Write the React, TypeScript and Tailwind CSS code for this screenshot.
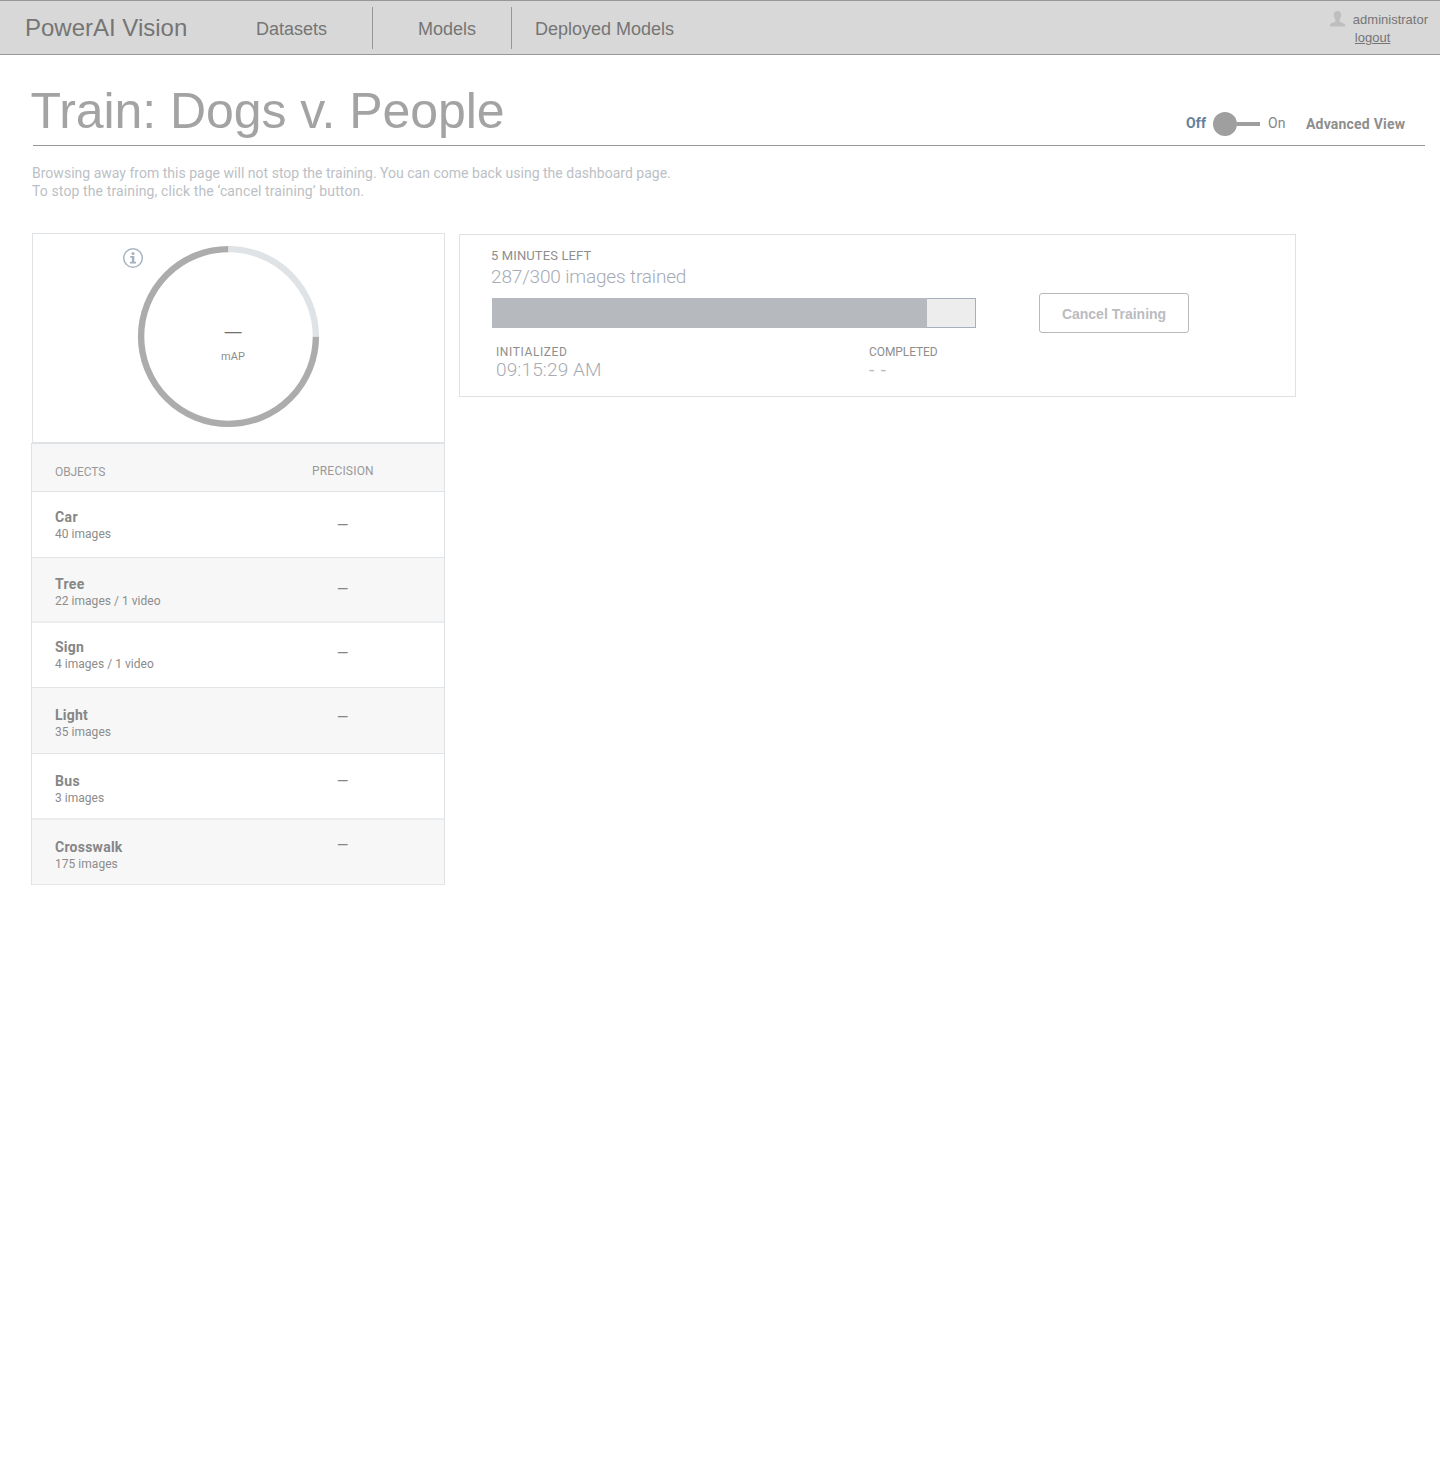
type Row = {
  name: string;
  count: string;
  row: string;
  label: string;
  dash: string;
  tracking: string;
};

const rows: Row[] = [
  { name: "Car", count: "40 images", row: "h-[66px] border-b border-[#e2e5e7] bg-white", label: "pt-[17px]", dash: "pt-[25px]", tracking: "tracking-[0.4px]" },
  { name: "Tree", count: "22 images / 1 video", row: "h-[65px] border-b-2 border-[#ebedee] bg-[#f7f7f7]", label: "pt-[18px]", dash: "pt-[23px]", tracking: "tracking-[0.3px]" },
  { name: "Sign", count: "4 images / 1 video", row: "h-[65px] border-b border-[#e2e5e7] bg-white", label: "pt-[16px]", dash: "pt-[22px]", tracking: "tracking-[0.2px]" },
  { name: "Light", count: "35 images", row: "h-[66px] border-b border-[#e2e5e7] bg-[#f7f7f7]", label: "pt-[19px]", dash: "pt-[21px]", tracking: "tracking-[0.2px]" },
  { name: "Bus", count: "3 images", row: "h-[66px] border-b-2 border-[#ebedee] bg-white", label: "pt-[19px]", dash: "pt-[19px]", tracking: "tracking-[0.35px]" },
  { name: "Crosswalk", count: "175 images", row: "h-[65px] border-b border-[#e4e7ea] bg-[#f7f7f7]", label: "pt-[19px]", dash: "pt-[17px]", tracking: "tracking-[0.25px]" },
];

function UserIcon() {
  return (
    <svg className="mt-[10px] h-4 w-4 shrink-0" viewBox="0 0 16 16" fill="#bcbec0">
      <path d="M7.5 0C10 0 11.2 1.6 11.1 4.1C11.4 4.3 11.4 5.2 10.9 5.7C10.7 6.9 10.2 7.7 9.6 8.3V10C9.9 11 11.3 11.4 12.8 12C14.5 12.6 15.2 13.4 15.2 14.6V15.6H-.1V14.6C-.1 13.4.5 12.6 2.2 12C3.7 11.4 5.1 11 5.4 10V8.3C4.8 7.7 4.3 6.9 4.1 5.7C3.6 5.2 3.6 4.3 3.9 4.1C3.8 1.6 5 0 7.5 0Z" />
    </svg>
  );
}

function InfoIcon() {
  return (
    <svg className="h-[22px] w-[22px]" viewBox="0 0 22 22" fill="none">
      <circle cx="11" cy="11" r="9.3" stroke="#abb6c5" strokeWidth="1.5" />
      <circle cx="11" cy="6.6" r="1.5" fill="#a3b0c0" />
      <path d="M8.2 9H12.3V14.8H14V16.6H8V14.8H9.9V10.8H8.2Z" fill="#a3b0c0" />
    </svg>
  );
}

function TopBar() {
  return (
    <header className="flex h-[55px] border-y border-[#979797] bg-[#d8d8d8] text-[#757575]">
      <div className="ml-[25px] w-[231px] pt-[13px] text-2xl leading-[27px]">PowerAI Vision</div>
      <nav className="flex text-lg leading-5">
        <a className="w-[116px] pt-[18px]">Datasets</a>
        <div className="mt-[6px] h-[42px] w-px bg-[#979797]" />
        <a className="w-[138px] pt-[18px] pl-[45px]">Models</a>
        <div className="mt-[6px] h-[42px] w-px bg-[#979797]" />
        <a className="pt-[18px] pl-[23px]">Deployed Models</a>
      </nav>
      <div className="mr-[12px] ml-auto flex">
        <UserIcon />
        <div className="ml-[7px] pt-[11px] text-[13px] leading-[15px]">
          <div>administrator</div>
          <a className="mt-[3px] ml-[2px] block underline">logout</a>
        </div>
      </div>
    </header>
  );
}

function Toggle() {
  return (
    <div className="flex items-start font-['Roboto'] text-sm leading-4">
      <span className="w-[27px] pt-[60px] font-bold tracking-[0.2px] text-[#64809a]">Off</span>
      <span className="mt-[57px] flex items-center">
        <span className="h-6 w-6 rounded-full bg-[#9f9f9f]" />
        <span className="h-1 w-[23px] bg-[#9f9f9f]" />
      </span>
      <span className="w-[38px] pt-[60px] pl-[8px] text-[#868686]">On</span>
      <span className="ml-[8px] w-[100px] pt-[61px] font-bold tracking-[0.2px] whitespace-nowrap text-[#8e8e8e]">Advanced View</span>
    </div>
  );
}

function Gauge() {
  return (
    <div className="relative h-[210px] border border-[#dfe3e6]">
      <div className="absolute top-[13px] left-[89px]"><InfoIcon /></div>
      <svg className="absolute top-[11px] left-[104px] h-[184px] w-[184px]" viewBox="0 0 184 184" fill="none" strokeWidth="6.4">
        <path d="M178.9 91.5A87.4 87.4 0 1 1 91.5 4.1" stroke="#acacac" />
        <path d="M91.5 4.1A87.4 87.4 0 0 1 178.9 91.5" stroke="#dfe3e6" />
      </svg>
      <div className="absolute top-[85px] left-[180px] w-10 text-center font-['Roboto']">
        <div className="text-[26px] leading-7 font-light text-[#6f6f6f]">—</div>
        <div className="mt-[3px] text-[11px] leading-[13px] tracking-[0.1px] text-[#8c8c8c]">mAP</div>
      </div>
    </div>
  );
}

function ObjectTable() {
  return (
    <div className="-ml-px border-x border-t border-[#dfe3e6] font-['Roboto']">
      <div className="flex h-12 border-b border-[#dfe3e6] bg-[#f7f7f7] pl-[23px] text-xs leading-[14px] text-[#999999]">
        <div className="w-[257px] pt-[21px] tracking-[-0.12px]">OBJECTS</div>
        <div className="pt-[20px] tracking-[0.2px]">PRECISION</div>
      </div>
      {rows.map((r) => (
        <div key={r.name} className={`flex pl-[23px] ${r.row}`}>
          <div className={`w-[277px] ${r.label}`}>
            <div className={`text-sm leading-4 font-bold text-[#868686] ${r.tracking}`}>{r.name}</div>
            <div className="mt-px text-xs leading-4 tracking-[0.03px] text-[#8c8c8c]">{r.count}</div>
          </div>
          <div className={`w-[21px] text-center ${r.dash}`}>
            <div className="text-[15px] leading-4 text-[#868686]">—</div>
          </div>
        </div>
      ))}
    </div>
  );
}

function ProgressPanel() {
  return (
    <section className="mt-px ml-[14px] flex h-[163px] w-[837px] border border-[#e0e1e3] pl-[31px] font-['Roboto']">
      <div className="w-[548px] pt-[13px]">
        <div className="text-[13px] leading-[15px] tracking-[0.12px] text-[#8e8e8e]">5 MINUTES LEFT</div>
        <div className="mt-[2px] text-[19px] leading-[23px] font-light tracking-[-0.16px] text-[#a7abb4]">287/300 images trained</div>
        <div className="mt-[10px] ml-px h-[30px] w-[484px] border border-[#a5b0bc] bg-[#ededed]">
          <div className="-m-px h-[30px] w-[435px] bg-[#b6b9be]" />
        </div>
        <div className="mt-[17px] ml-[5px] flex">
          <div className="w-[373px]">
            <div className="text-xs leading-[14px] tracking-[0.6px] text-[#8e8e8e]">INITIALIZED</div>
            <div className="text-[19px] leading-[21px] font-light tracking-[0.14px] text-[#a7abb4]">09:15:29 AM</div>
          </div>
          <div>
            <div className="text-xs leading-[14px] tracking-[-0.08px] text-[#8e8e8e]">COMPLETED</div>
            <div className="text-[19px] leading-[21px] tracking-[0.9px] text-[#b6b9be]">- -</div>
          </div>
        </div>
      </div>
      <button className="mt-[58px] h-10 w-[150px] rounded-[3px] border border-[#b6b9be] pt-px font-['Liberation_Sans'] text-sm leading-4 font-bold text-[#babcbf]">
        Cancel Training
      </button>
    </section>
  );
}

export default function App() {
  return (
    <div className="min-h-[1466px] w-[1440px] bg-white font-['Liberation_Sans',sans-serif]">
      <TopBar />
      <div className="mr-[15px] ml-[33px] flex h-[91px] justify-between border-b border-[#979797] pr-[19px]">
        <h1 className="-ml-[2.5px] pt-[28px] text-[50px] leading-[56px] tracking-[-0.06px] whitespace-nowrap text-[#a3a3a3]">Train: Dogs v. People</h1>
        <Toggle />
      </div>
      <div className="mt-[18px] ml-8 h-[69px] font-['Roboto'] text-sm leading-[18px] text-[#bcbfc5]">
        <p className="tracking-[0.015px]">Browsing away from this page will not stop the training. You can come back using the dashboard page.</p>
        <p className="tracking-[0.12px]">To stop the training, click the ‘cancel training’ button.</p>
      </div>
      <main className="ml-8 flex items-start">
        <div className="w-[413px]">
          <Gauge />
          <ObjectTable />
        </div>
        <ProgressPanel />
      </main>
    </div>
  );
}
